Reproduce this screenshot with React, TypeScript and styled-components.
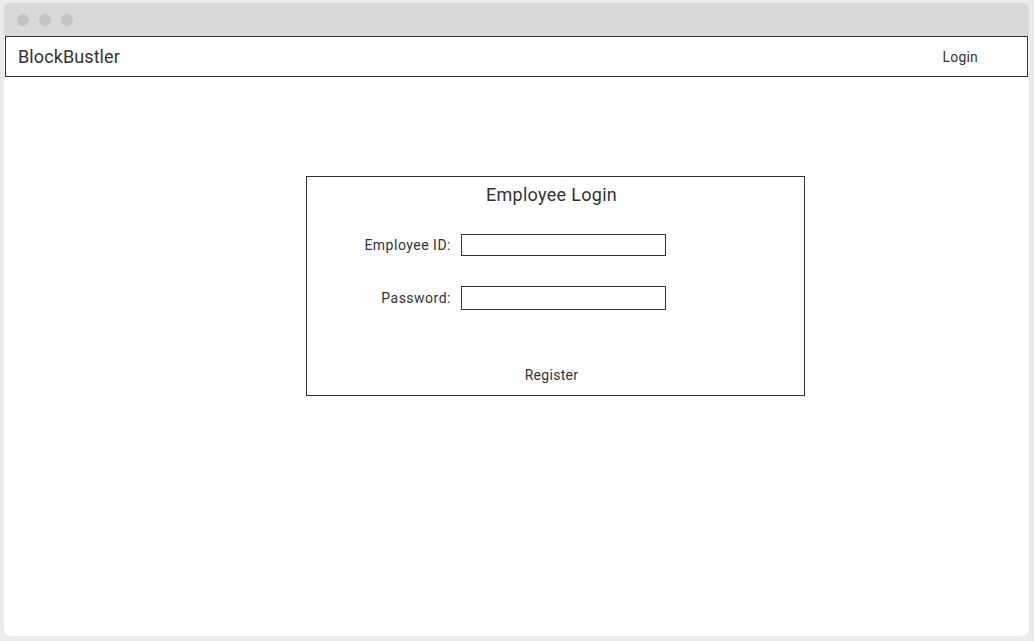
import React from 'react';
import styled, { createGlobalStyle } from 'styled-components';

const GlobalStyle = createGlobalStyle`
  html, body {
    margin: 0;
    padding: 0;
    background: #ebebeb;
    font-family: Roboto, "Liberation Sans", Arial, sans-serif;
    color: #333;
  }
  * { box-sizing: border-box; }
`;

const Window = styled.div`
  margin: 3px 0 0 4px;
  width: 1025px;
  height: 633px;
  background: #fff;
  border-radius: 6px;
  overflow: hidden;
  box-shadow: 0 0 1px rgba(0,0,0,0.12);
  display: flex;
  flex-direction: column;
`;

const TitleBar = styled.div`
  height: 33px;
  background: #d9d9d9;
  display: flex;
  align-items: center;
  gap: 10px;
  padding-left: 13px;
  flex-shrink: 0;
`;

const Dot = styled.span`
  width: 12px;
  height: 12px;
  border-radius: 50%;
  background: #c4c4c4;
`;

const NavBar = styled.nav`
  margin: 0 1px;
  height: 41px;
  border: 1px solid #333;
  display: flex;
  align-items: center;
  justify-content: space-between;
  padding: 0 49px 0 12px;
`;

const Brand = styled.div`
  font-size: 18px;
  letter-spacing: 0.1px;
  color: #333;
`;

const NavLink = styled.a`
  font-size: 14px;
  letter-spacing: 0.2px;
  color: #333;
  text-decoration: none;
  cursor: pointer;
`;

const Content = styled.main`
  flex: 1;
  padding: 99px 0 0 302px;
`;

const Card = styled.section`
  width: 499px;
  height: 220px;
  border: 1px solid #333;
  padding: 6px 8px 0 0;
  display: flex;
  flex-direction: column;
  align-items: center;
`;

const Title = styled.h2`
  margin: 0;
  font-size: 18px;
  font-weight: 400;
  line-height: 24px;
  letter-spacing: 0.3px;
`;

const Form = styled.div`
  align-self: flex-start;
  margin-top: 27px;
  display: grid;
  grid-template-columns: 144px 205px;
  column-gap: 10px;
  row-gap: 30px;
  align-items: center;
`;

const Label = styled.label`
  font-size: 14px;
  letter-spacing: 0.5px;
  text-align: right;
`;

const Input = styled.input<{ $h: number }>`
  width: 205px;
  height: ${p => p.$h}px;
  border: 1px solid #333;
  border-radius: 0;
  padding: 0 4px;
  font: inherit;
  outline: none;
`;

const RegisterLink = styled.a`
  margin-top: 57px;
  font-size: 14px;
  letter-spacing: 0.3px;
  color: #333;
  cursor: pointer;
`;

export default function App() {
  return (
    <>
      <GlobalStyle />
      <Window>
        <TitleBar>
          <Dot />
          <Dot />
          <Dot />
        </TitleBar>
        <NavBar>
          <Brand>BlockBustler</Brand>
          <NavLink>Login</NavLink>
        </NavBar>
        <Content>
          <Card>
            <Title>Employee Login</Title>
            <Form>
              <Label>Employee ID:</Label>
              <Input $h={22} type="text" />
              <Label>Password:</Label>
              <Input $h={24} type="password" />
            </Form>
            <RegisterLink>Register</RegisterLink>
          </Card>
        </Content>
      </Window>
    </>
  );
}
